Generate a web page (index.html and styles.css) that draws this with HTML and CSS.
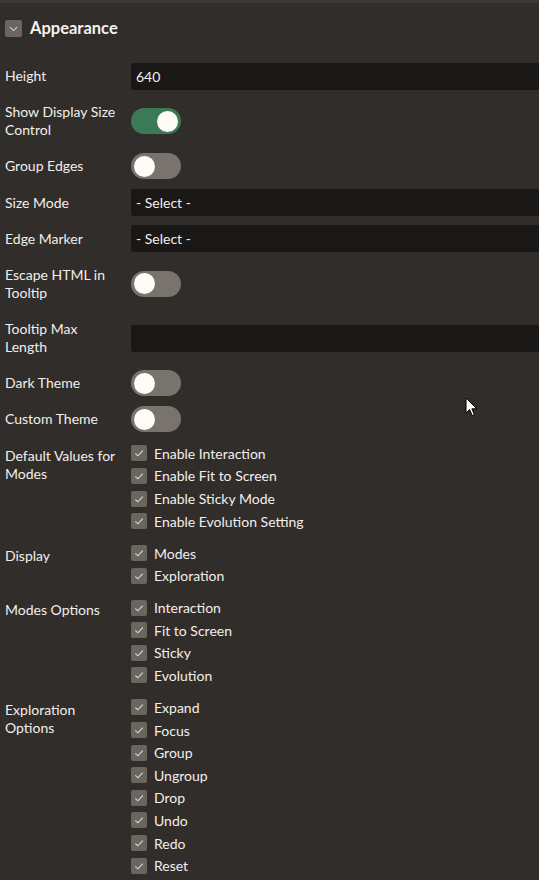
FILE: index.html
```html
<!DOCTYPE html>
<html>
<head>
<meta charset="utf-8">
<link rel="stylesheet" href="styles.css">
</head>
<body>
<div class="panel">
  <div class="section-head">
    <span class="collapse-btn">
      <svg width="17" height="17" viewBox="0 0 17 17"><path d="M5 7.2 L8.5 10.6 L12 7.2" fill="none" stroke="#d8d4cf" stroke-width="1.1"/></svg>
    </span>
    <span class="section-title">Appearance</span>
  </div>

  <div class="form">
    <div class="row">
      <div class="label">Height</div>
      <div class="control"><div class="input">640</div></div>
    </div>
    <div class="row">
      <div class="label">Show Display Size<br>Control</div>
      <div class="control"><span class="switch on"><span class="knob"></span></span></div>
    </div>
    <div class="row">
      <div class="label">Group Edges</div>
      <div class="control"><span class="switch"><span class="knob"></span></span></div>
    </div>
    <div class="row">
      <div class="label">Size Mode</div>
      <div class="control"><div class="input">- Select -</div></div>
    </div>
    <div class="row">
      <div class="label">Edge Marker</div>
      <div class="control"><div class="input">- Select -</div></div>
    </div>
    <div class="row">
      <div class="label">Escape HTML in<br>Tooltip</div>
      <div class="control"><span class="switch"><span class="knob"></span></span></div>
    </div>
    <div class="row">
      <div class="label">Tooltip Max<br>Length</div>
      <div class="control"><div class="input"></div></div>
    </div>
    <div class="row">
      <div class="label">Dark Theme</div>
      <div class="control"><span class="switch"><span class="knob"></span></span></div>
    </div>
    <div class="row">
      <div class="label">Custom Theme</div>
      <div class="control"><span class="switch"><span class="knob"></span></span></div>
    </div>

    <div class="row check-row">
      <div class="label">Default Values for<br>Modes</div>
      <ul class="checks">
        <li><span class="box"><svg viewBox="0 0 16 16"><path d="M4.3 8.3 L6.9 10.8 L11.8 5.6"/></svg></span>Enable Interaction</li>
        <li><span class="box"><svg viewBox="0 0 16 16"><path d="M4.3 8.3 L6.9 10.8 L11.8 5.6"/></svg></span>Enable Fit to Screen</li>
        <li><span class="box"><svg viewBox="0 0 16 16"><path d="M4.3 8.3 L6.9 10.8 L11.8 5.6"/></svg></span>Enable Sticky Mode</li>
        <li><span class="box"><svg viewBox="0 0 16 16"><path d="M4.3 8.3 L6.9 10.8 L11.8 5.6"/></svg></span>Enable Evolution Setting</li>
      </ul>
    </div>
    <div class="row check-row">
      <div class="label">Display</div>
      <ul class="checks">
        <li><span class="box"><svg viewBox="0 0 16 16"><path d="M4.3 8.3 L6.9 10.8 L11.8 5.6"/></svg></span>Modes</li>
        <li><span class="box"><svg viewBox="0 0 16 16"><path d="M4.3 8.3 L6.9 10.8 L11.8 5.6"/></svg></span>Exploration</li>
      </ul>
    </div>
    <div class="row check-row">
      <div class="label">Modes Options</div>
      <ul class="checks">
        <li><span class="box"><svg viewBox="0 0 16 16"><path d="M4.3 8.3 L6.9 10.8 L11.8 5.6"/></svg></span>Interaction</li>
        <li><span class="box"><svg viewBox="0 0 16 16"><path d="M4.3 8.3 L6.9 10.8 L11.8 5.6"/></svg></span>Fit to Screen</li>
        <li><span class="box"><svg viewBox="0 0 16 16"><path d="M4.3 8.3 L6.9 10.8 L11.8 5.6"/></svg></span>Sticky</li>
        <li><span class="box"><svg viewBox="0 0 16 16"><path d="M4.3 8.3 L6.9 10.8 L11.8 5.6"/></svg></span>Evolution</li>
      </ul>
    </div>
    <div class="row check-row">
      <div class="label">Exploration<br>Options</div>
      <ul class="checks">
        <li><span class="box"><svg viewBox="0 0 16 16"><path d="M4.3 8.3 L6.9 10.8 L11.8 5.6"/></svg></span>Expand</li>
        <li><span class="box"><svg viewBox="0 0 16 16"><path d="M4.3 8.3 L6.9 10.8 L11.8 5.6"/></svg></span>Focus</li>
        <li><span class="box"><svg viewBox="0 0 16 16"><path d="M4.3 8.3 L6.9 10.8 L11.8 5.6"/></svg></span>Group</li>
        <li><span class="box"><svg viewBox="0 0 16 16"><path d="M4.3 8.3 L6.9 10.8 L11.8 5.6"/></svg></span>Ungroup</li>
        <li><span class="box"><svg viewBox="0 0 16 16"><path d="M4.3 8.3 L6.9 10.8 L11.8 5.6"/></svg></span>Drop</li>
        <li><span class="box"><svg viewBox="0 0 16 16"><path d="M4.3 8.3 L6.9 10.8 L11.8 5.6"/></svg></span>Undo</li>
        <li><span class="box"><svg viewBox="0 0 16 16"><path d="M4.3 8.3 L6.9 10.8 L11.8 5.6"/></svg></span>Redo</li>
        <li><span class="box"><svg viewBox="0 0 16 16"><path d="M4.3 8.3 L6.9 10.8 L11.8 5.6"/></svg></span>Reset</li>
      </ul>
    </div>
  </div>

  <svg class="cursor" width="13" height="21" viewBox="0 0 13 21"><path d="M1 1 L1 16 L4.6 12.6 L7.2 18.6 L9.4 17.6 L6.9 11.8 L11.8 11.8 Z" fill="#fff" stroke="#000" stroke-width="1" stroke-linejoin="miter"/></svg>
</div>
</body>
</html>
```

FILE: styles.css
```css
html, body {
  margin: 0;
  padding: 0;
  background: #312d2a;
  overflow: hidden;
}

body {
  font-family: Lato, "Open Sans", "Liberation Sans", sans-serif;
  font-size: 14px;
  color: #f1efec;
}

.panel {
  position: relative;
  width: 539px;
  height: 880px;
  border-top: 3px solid #3d3936;
  box-sizing: border-box;
}

.section-head {
  display: flex;
  align-items: center;
  gap: 8px;
  padding: 15px 0 0 5px;
  height: 20px;
}

.collapse-btn {
  width: 17px;
  height: 17px;
  background: #6b6661;
  border-radius: 2px;
  display: flex;
}

.section-title {
  font-size: 16.5px;
  font-weight: bold;
  color: #f4f2ef;
  line-height: 20px;
}

.form {
  margin-top: 20px;
}

.row {
  display: grid;
  grid-template-columns: 120px 1fr;
  column-gap: 6px;
  align-items: center;
  padding-left: 5px;
}

.label {
  padding: 9.08px 0;
  line-height: 18px;
}

.control {
  display: flex;
  align-items: center;
}

.input {
  flex: 1;
  height: 27px;
  line-height: 27px;
  background: #1a1817;
  border-radius: 3px 0 0 3px;
  padding-left: 5px;
  color: #f1efec;
}

.switch {
  width: 50px;
  height: 26px;
  border-radius: 13px;
  background: #79736e;
  display: flex;
  align-items: center;
  padding: 0 3px;
  box-sizing: border-box;
}

.switch.on {
  background: #3a7a56;
  justify-content: flex-end;
}

.knob {
  width: 21px;
  height: 21px;
  border-radius: 50%;
  background: #fffcf8;
}

.check-row {
  align-items: start;
  padding-top: 4.7px;
  padding-bottom: 4.7px;
}

.check-row .label {
  padding: 4.9px 0 0;
  line-height: 18px;
}

.checks {
  list-style: none;
  margin: 0;
  padding: 0;
}

.checks li {
  display: flex;
  align-items: center;
  height: 22.6px;
  gap: 7px;
}

.box {
  width: 16px;
  height: 16px;
  border-radius: 2px;
  background: #6b655f;
  display: flex;
}

.box svg {
  width: 16px;
  height: 16px;
}

.box path {
  fill: none;
  stroke: #ddd9d4;
  stroke-width: 1.1;
}

.cursor {
  position: absolute;
  left: 465px;
  top: 394px;
}
```
